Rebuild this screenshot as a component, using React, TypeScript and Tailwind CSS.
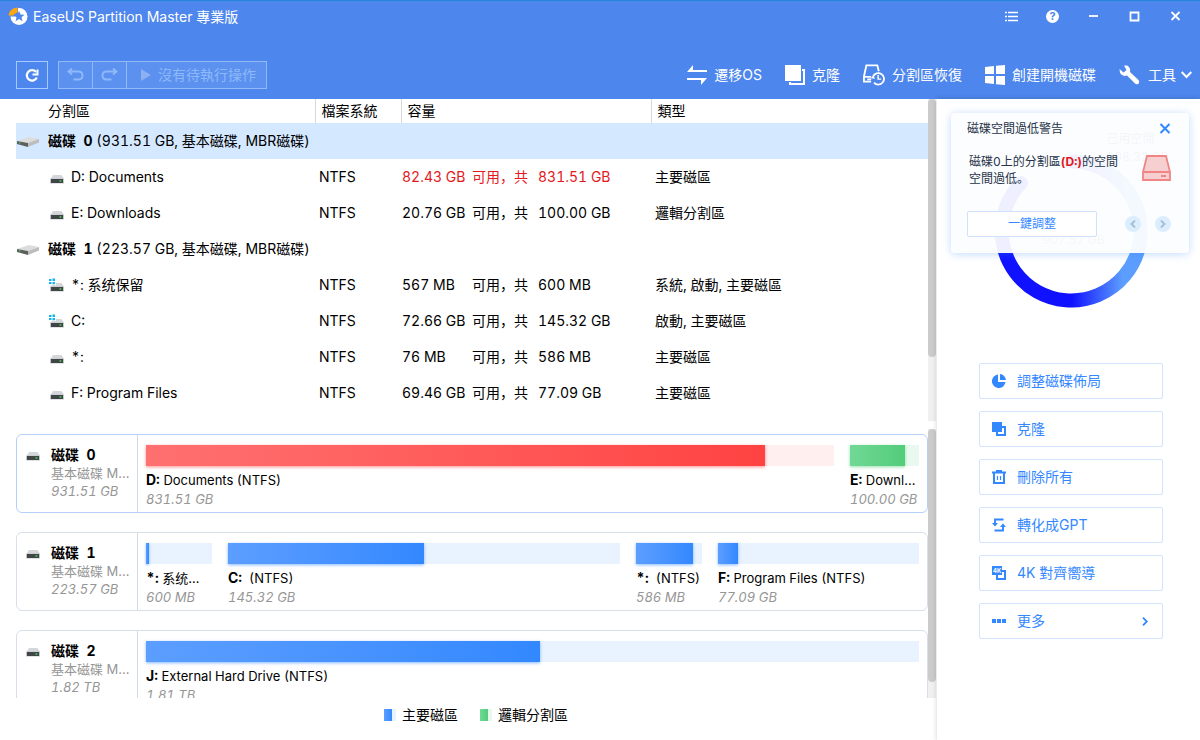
import type { ReactNode } from "react";

type Volume = {
  letter: string;
  name: string;
  free: string;
  total: string;
  type: string;
  system?: boolean;
  low?: boolean;
};

type Disk = { id: number; info: string; volumes: Volume[] };

type Bar = {
  letter: string;
  label: string;
  size: string;
  grow: number;
  used: number;
  tone: "blue" | "red" | "green";
};

const disks: Disk[] = [
  {
    id: 0,
    info: "(931.51 GB, 基本磁碟, MBR磁碟)",
    volumes: [
      { letter: "D:", name: "Documents", free: "82.43 GB", total: "831.51 GB", type: "主要磁區", low: true },
      { letter: "E:", name: "Downloads", free: "20.76 GB", total: "100.00 GB", type: "邏輯分割區" },
    ],
  },
  {
    id: 1,
    info: "(223.57 GB, 基本磁碟, MBR磁碟)",
    volumes: [
      { letter: "*:", name: "系统保留", free: "567 MB", total: "600 MB", type: "系統, 啟動, 主要磁區", system: true },
      { letter: "C:", name: "", free: "72.66 GB", total: "145.32 GB", type: "啟動, 主要磁區", system: true },
      { letter: "*:", name: "", free: "76 MB", total: "586 MB", type: "主要磁區" },
      { letter: "F:", name: "Program Files", free: "69.46 GB", total: "77.09 GB", type: "主要磁區" },
    ],
  },
];

const maps: { id: number; size: string; bars: Bar[] }[] = [
  {
    id: 0,
    size: "931.51 GB",
    bars: [
      { letter: "D:", label: "Documents (NTFS)", size: "831.51 GB", grow: 688, used: 90, tone: "red" },
      { letter: "E:", label: "Downloads (NTFS)", size: "100.00 GB", grow: 69, used: 79, tone: "green" },
    ],
  },
  {
    id: 1,
    size: "223.57 GB",
    bars: [
      { letter: "*:", label: "系统保留 (NTFS)", size: "600 MB", grow: 66, used: 5, tone: "blue" },
      { letter: "C:", label: " (NTFS)", size: "145.32 GB", grow: 392, used: 50, tone: "blue" },
      { letter: "*:", label: " (NTFS)", size: "586 MB", grow: 66, used: 87, tone: "blue" },
      { letter: "F:", label: "Program Files (NTFS)", size: "77.09 GB", grow: 201, used: 10, tone: "blue" },
    ],
  },
  {
    id: 2,
    size: "1.82 TB",
    bars: [{ letter: "J:", label: "External Hard Drive (NTFS)", size: "1.81 TB", grow: 773, used: 51, tone: "blue" }],
  },
];

const tones = {
  blue: {
    track: "bg-[#e8f3ff]",
    fill: "bg-linear-to-r from-[#5c9eff] to-[#3388ff] shadow-[0_1px_3px_rgba(51,136,255,0.6)]",
  },
  red: {
    track: "bg-[#ffefee]",
    fill: "bg-linear-to-r from-[#ff7070] to-[#ff4242] shadow-[0_1px_3px_rgba(255,66,66,0.6)]",
  },
  green: {
    track: "bg-[#e9f9ef]",
    fill: "bg-linear-to-r from-[#70d995] to-[#52cc7a] shadow-[0_1px_3px_rgba(82,204,122,0.6)]",
  },
};

function Logo() {
  return (
    <svg width="20" height="19" viewBox="0 0 20 19" aria-hidden="true">
      <circle cx="11" cy="9.5" r="8.5" fill="#fff" />
      <path d="M-1 -1H10V9.500H-1Z" fill="#4d86ec" />
      <path d="M9.500 0.500V5.500C7.500 6.200 6.300 7 5.300 8.500H0.500C1 4 4.500 0.800 9.500 0.500Z" fill="#ffa60d" />
      <path
        d="M11 3.800L12.500 7.500L16.500 7.800L13.500 10.300L14.500 14.200L11 12.100L7.600 14.200L8.500 10.300L5.500 7.800L9.500 7.500Z"
        fill="#4d86ec"
      />
    </svg>
  );
}

function DriveIcon({ system }: { system?: boolean }) {
  return (
    <svg width="16" height="16" viewBox="0 0 16 16" className="shrink-0" aria-hidden="true">
      <path d="M4 6H12.500L15 10H1.500Z" fill="#d3d7da" />
      <rect x="1" y="9.500" width="14" height="5" fill="#c3c7cc" />
      <rect x="2" y="10" width="12" height="4" fill="#414548" />
      <rect x="10.500" y="11.200" width="1.800" height="1.500" fill="#2fe236" />
      {system && (
        <g>
          <path d="M0 1H7V8H0Z" fill="#fff" />
          <path d="M0 2H2.500V4H0ZM3.500 1.500H6V4H3.500ZM0 5H2.500V7H0ZM3.500 5H6V7.300H3.500Z" fill="#12b5ec" />
        </g>
      )}
    </svg>
  );
}

function DiskIcon() {
  return (
    <svg width="24" height="14" viewBox="0 0 24 14" className="shrink-0" aria-hidden="true">
      <path d="M1 7L13 3L23 5L12 9Z" fill="#dcdcdc" />
      <path d="M1 7L12 9V13L1 10Z" fill="#5c605d" />
      <path d="M12 9L23 5V8.500L12 13Z" fill="#bdbdbd" />
      <rect x="3" y="8.200" width="1.500" height="1.500" fill="#4cae4f" />
    </svg>
  );
}

function Scrollbar({ thumb }: { thumb: string }) {
  return (
    <div className="w-2 shrink-0 bg-[#f0f0f0]" aria-hidden="true">
      <div className={`${thumb} rounded-full bg-[#cbcbcb]`} />
    </div>
  );
}

function TitleBar() {
  return (
    <div className="flex h-[31px] items-center justify-between pl-2 pr-1">
      <div className="flex items-center gap-[5px]">
        <Logo />
        <h1 className="text-sm text-white">EaseUS Partition Master 專業版</h1>
      </div>
      <div className="flex">
        <WindowButton label="選單">
          <path d="M0 2.500H2M3 2.500H13M0 6.500H2M3 6.500H13M0 10.500H2M3 10.500H13" stroke="#fff" strokeWidth="1.500" fill="none" />
        </WindowButton>
        <button type="button" aria-label="說明" className="flex h-7 w-[41px] items-center justify-center">
          <span className="flex size-[13px] items-center justify-center rounded-full bg-white text-[11px] font-bold text-[#4d86ec]">
            ?
          </span>
        </button>
        <WindowButton label="最小化">
          <path d="M2 6H11" stroke="#fff" strokeWidth="1.800" />
        </WindowButton>
        <WindowButton label="最大化">
          <path d="M2.500 2.500H10.500V10.500H2.500Z" stroke="#fff" strokeWidth="1.800" fill="none" />
        </WindowButton>
        <WindowButton label="關閉">
          <path d="M2.500 2L10.500 10M10.500 2L2.500 10" stroke="#fff" strokeWidth="1.800" />
        </WindowButton>
      </div>
    </div>
  );
}

function WindowButton({ label, children }: { label: string; children: ReactNode }) {
  return (
    <button type="button" aria-label={label} className="flex h-7 w-[41px] items-center justify-center">
      <svg width="13" height="13" viewBox="0 0 13 13" aria-hidden="true">
        {children}
      </svg>
    </button>
  );
}

function ToolButton({ icon, children }: { icon: ReactNode; children: ReactNode }) {
  return (
    <button type="button" className="flex items-center gap-[7px] whitespace-nowrap text-sm text-white">
      {icon}
      {children}
    </button>
  );
}

function Toolbar() {
  return (
    <div className="flex h-7 items-center justify-between pl-4 pr-2">
      <div className="flex gap-[10px]">
        <button
          type="button"
          aria-label="重新整理"
          className="flex h-7 w-8 items-center justify-center border border-[#a6c8ff]"
        >
          <svg width="14" height="14" viewBox="0 0 14 14" fill="none" aria-hidden="true">
            <path d="M11.800 9.500A5.200 5.200 0 1 1 11 4" stroke="#fff" strokeWidth="2.200" />
            <path d="M12.500 1.500V6.500H7.500" fill="none" stroke="#fff" strokeWidth="2" />
          </svg>
        </button>
        <div className="flex h-7 divide-x divide-[#92b9f8] border border-[#92b9f8] bg-[#5c91ef]">
          <button type="button" disabled aria-label="復原" className="flex w-[34px] items-center justify-center">
            <svg width="18" height="14" viewBox="0 0 18 14" fill="none" stroke="#8db9fa" strokeWidth="1.900" aria-hidden="true">
              <path d="M5 0.500L1.500 3.500L5 6.500M1.500 3.500H11.500Q15.500 3.500 15.500 7.500T11.500 11.500H6.500" />
            </svg>
          </button>
          <button type="button" disabled aria-label="重做" className="flex w-[34px] items-center justify-center">
            <svg width="18" height="14" viewBox="0 0 18 14" fill="none" stroke="#8db9fa" strokeWidth="1.900" aria-hidden="true">
              <path d="M12 0.500L15.500 3.500L12 6.500M15.500 3.500H5.500Q1.500 3.500 1.500 7.500T5.500 11.500H10.500" />
            </svg>
          </button>
          <button type="button" disabled className="flex items-center gap-[7px] pl-[14px] pr-[10px] text-sm text-[#8db9fa]">
            <svg width="10" height="12" viewBox="0 0 10 12" aria-hidden="true">
              <path d="M0 0L10 6L0 12Z" fill="#8db0f3" />
            </svg>
            沒有待執行操作
          </button>
        </div>
      </div>

      <div className="flex gap-[23px]">
        <ToolButton
          icon={
            <svg width="20" height="20" viewBox="0 0 20 20" aria-hidden="true">
              <path d="M0 7L6 0V5H20V7ZM20 13L14 20V15H0V13Z" fill="#fff" />
            </svg>
          }
        >
          遷移OS
        </ToolButton>
        <ToolButton
          icon={
            <svg width="20" height="20" viewBox="0 0 20 20" aria-hidden="true">
              <path d="M0 0H16V16H0Z" fill="#fff" />
              <path d="M17 5H19V19H5V17" fill="none" stroke="#fff" strokeWidth="2" />
            </svg>
          }
        >
          克隆
        </ToolButton>
        <ToolButton
          icon={
            <svg width="22" height="22" viewBox="0 0 23 23" fill="none" stroke="#fff" strokeWidth="1.900" aria-hidden="true">
              <path d="M16.500 7.500L15 1.500H3.500L1 13V18.500H8.500M1 13.500H8.500M4.500 16H8.500" />
              <path d="M10.500 13A6 6 0 1 1 11.500 19.500" />
              <path d="M8 15L11 12L12.500 15.500Z" fill="#fff" stroke="none" />
              <path d="M15.800 11.500V15.800H19" strokeWidth="1.500" />
            </svg>
          }
        >
          分割區恢復
        </ToolButton>
        <ToolButton
          icon={
            <svg width="20" height="20" viewBox="0 0 20 20" fill="#fff" aria-hidden="true">
              <path d="M0 2L9 1V9H0ZM11 0.800L20 0V9H11ZM0 11H9V19L0 18ZM11 11H20V20L11 19.200Z" />
            </svg>
          }
        >
          創建開機磁碟
        </ToolButton>
        <ToolButton
          icon={
            <svg width="22" height="20" viewBox="0 0 22 20" fill="none" aria-hidden="true">
              <path
                d="M5 0.500L8 0.500Q12 2.500 11 7L19.500 15Q21 17 19.500 18.800Q17.500 20 16 18.500L8 10.500Q3.500 12 1 8L0.500 4L4.500 7.500L7.500 5Z"
                fill="#fff"
              />
            </svg>
          }
        >
          工具
          <svg width="11" height="8" viewBox="0 0 11 8" fill="none" className="-ml-0.5" aria-hidden="true">
            <path d="M0.700 1L5.500 6L10.300 1" stroke="#fff" strokeWidth="2" />
          </svg>
        </ToolButton>
      </div>
    </div>
  );
}

function PartitionTable() {
  return (
    <div className="flex min-h-0 flex-[6]">
      <div className="min-w-0 flex-1 overflow-hidden">
        <table className="w-full table-fixed text-left text-sm">
          <colgroup>
            <col className="w-[299px]" />
            <col className="w-[86px]" />
            <col className="w-[250px]" />
            <col />
          </colgroup>
          <thead>
            <tr className="h-6 leading-6">
              <th className="pl-8 font-normal">分割區</th>
              <th className="border-l border-[#d8d8d8] pl-1.5 font-normal">檔案系統</th>
              <th className="border-l border-[#d8d8d8] pl-1.5 font-normal">容量</th>
              <th className="border-l border-[#d8d8d8] pl-1.5 font-normal">類型</th>
            </tr>
          </thead>
          {disks.map((disk) => (
            <tbody key={disk.id}>
              <tr className={disk.id === 0 ? "h-9 bg-[#d4e8ff]" : "h-9"}>
                <td colSpan={4}>
                  <div className="flex items-center gap-2">
                    <DiskIcon />
                    <span className="whitespace-pre">
                      <b>磁碟&nbsp; {disk.id}</b> {disk.info}
                    </span>
                  </div>
                </td>
              </tr>
              {disk.volumes.map((v) => (
                <tr key={v.letter + v.total} className="h-9">
                  <td className="pl-[33px]">
                    <div className="flex items-center gap-1.5">
                      <DriveIcon system={v.system} />
                      <span>
                        {v.letter} {v.name}
                      </span>
                    </div>
                  </td>
                  <td className="pl-1">NTFS</td>
                  <td className={v.low ? "pl-px text-[#e3191e]" : "pl-px"}>
                    <div className="flex">
                      <span className="w-[70px]">{v.free}</span>
                      <span className="w-[42px]">可用，</span>
                      <span className="w-6">共</span>
                      <span>{v.total}</span>
                    </div>
                  </td>
                  <td className="pl-1">{v.type}</td>
                </tr>
              ))}
            </tbody>
          ))}
        </table>
      </div>
      <Scrollbar thumb="h-4/5" />
    </div>
  );
}

function DiskMap() {
  return (
    <div className="flex min-h-0 flex-[5]">
      <div className="flex min-w-0 flex-1 flex-col gap-[19px] overflow-hidden pt-[5px]">
        {maps.map((disk) => (
          <section
            key={disk.id}
            className={`flex h-[79px] shrink-0 rounded-md border ${
              disk.id === 0 ? "border-[#b5d1fb]" : "border-[#d9dfe8]"
            }`}
          >
            <div className="flex w-[121px] shrink-0 gap-[10px] border-r border-[#d0dae8] pl-2 pt-[11px]">
              <DriveIcon />
              <div className="min-w-0 flex-1 pr-1.5 text-[13px] leading-[18px] text-[#969696]">
                <h2 className="text-sm leading-[18px] font-bold text-black">磁碟&nbsp; {disk.id}</h2>
                <p className="truncate">基本磁碟 MBR磁碟</p>
                <p className="italic">{disk.size}</p>
              </div>
            </div>
            <div className="flex min-w-0 flex-1 gap-4 pt-[10px] pr-2 pl-2">
              {disk.bars.map((bar) => (
                <div key={bar.letter + bar.size} className="min-w-0 basis-0" style={{ flexGrow: bar.grow }}>
                  <div className={`h-[21px] ${tones[bar.tone].track}`}>
                    <div className={`h-full ${tones[bar.tone].fill}`} style={{ width: `${bar.used}%` }} />
                  </div>
                  <p className="mt-1 truncate text-[13px] leading-5 whitespace-pre">
                    <b className="text-sm leading-5">{bar.letter}</b> {bar.label}
                  </p>
                  <p className="text-[13px] leading-[18px] whitespace-nowrap text-[#969696] italic">{bar.size}</p>
                </div>
              ))}
            </div>
          </section>
        ))}
      </div>
      <Scrollbar thumb="h-[94%]" />
    </div>
  );
}

function UsageRing() {
  return (
    <div className="relative mx-auto size-[154px]">
      <svg viewBox="0 0 154 154" className="size-full" fill="none" aria-hidden="true">
        <defs>
          <linearGradient id="ring" x1="0" y1="0" x2="154" y2="0" gradientUnits="userSpaceOnUse">
            <stop offset="0.500" stopColor="#1012ff" />
            <stop offset="0.830" stopColor="#5c9eff" />
          </linearGradient>
        </defs>
        <path d="M26 29A69.500 69.500 0 1 0 77 7.500" stroke="url(#ring)" strokeWidth="14" strokeLinecap="round" />
      </svg>
      <p className="absolute top-[78px] left-12 text-xs whitespace-nowrap text-[#777]">907.57 GB</p>
      <p className="absolute -top-6 left-[112px] text-xs leading-[18px] whitespace-nowrap text-[#555]">
        已用空間
        <br />
        908.32 GB
      </p>
    </div>
  );
}

function LowSpaceAlert() {
  return (
    <div
      role="alert"
      className="absolute top-[14px] right-[11px] left-[14px] h-[140px] rounded bg-[#fcfdff]/95 pt-2 pr-[18px] pl-4 text-xs text-[#263449] shadow-[0_1px_8px_rgba(51,136,255,0.3)]"
    >
      <div className="flex h-4 items-center justify-between">
        <h2>磁碟空間過低警告</h2>
        <button type="button" aria-label="關閉警告">
          <svg width="12" height="12" viewBox="0 0 12 12" aria-hidden="true">
            <path d="M1.500 1L10.500 10M10.500 1L1.500 10" stroke="#3388ff" strokeWidth="2" />
          </svg>
        </button>
      </div>
      <div className="mt-4 flex justify-between pl-0.5">
        <p className="leading-[17px]">
          磁碟0上的分割區<b className="text-[#e3191e]">(D:)</b>的空間
          <br />
          空間過低。
        </p>
        <svg width="29" height="26" viewBox="0 0 29 26" className="mt-0.5" fill="#f6cfd0" stroke="#f18484" strokeWidth="1.800" aria-hidden="true">
          <path d="M1 17L5 1H24L28 17V25H1ZM1 17H28M19 21H24" />
        </svg>
      </div>
      <div className="mt-6 flex items-center justify-between">
        <button type="button" className="h-[26px] w-[130px] rounded-xs border border-[#cfe1fc] bg-white text-[#3388ff]">
          一鍵調整
        </button>
        <div className="flex gap-[14px]">
          <button type="button" aria-label="上一則" className="flex size-4 items-center justify-center rounded-full bg-[#dcedfd]">
            <svg width="6" height="8" viewBox="0 0 6 8" fill="none" aria-hidden="true">
              <path d="M5 0.500L1.500 4L5 7.500" stroke="#a3bdd6" strokeWidth="1.800" />
            </svg>
          </button>
          <button type="button" aria-label="下一則" className="flex size-4 items-center justify-center rounded-full bg-[#dcedfd]">
            <svg width="6" height="8" viewBox="0 0 6 8" fill="none" aria-hidden="true">
              <path d="M1 0.500L4.500 4L1 7.500" stroke="#a3bdd6" strokeWidth="1.800" />
            </svg>
          </button>
        </div>
      </div>
    </div>
  );
}

const actions: { label: string; icon: ReactNode; more?: boolean }[] = [
  {
    label: "調整磁碟佈局",
    icon: <path d="M6 0.500A6.800 6.800 0 1 0 13.500 8H6ZM8 0V6H14A6.500 6.500 0 0 0 8 0Z" fill="#3388ff" />,
  },
  {
    label: "克隆",
    icon: (
      <>
        <path d="M0 0H10V10H0Z" fill="#3388ff" />
        <path d="M10 5H13V13H5V10" fill="none" stroke="#3388ff" strokeWidth="2" />
      </>
    ),
  },
  {
    label: "刪除所有",
    icon: (
      <>
        <path d="M0 2.500H14M4 1H10M2 3V13H12V3" fill="none" stroke="#3388ff" strokeWidth="2" />
        <path d="M5.500 6V10M8.500 6V10" stroke="#3388ff" strokeWidth="1.200" />
      </>
    ),
  },
  {
    label: "轉化成GPT",
    icon: (
      <>
        <path d="M11.500 1.500H3V7.500M2.500 12.500H11V6.500" fill="none" stroke="#3388ff" strokeWidth="1.900" />
        <path d="M0 5L3 8.500L6 5ZM8 9L11 5.500L14 9Z" fill="#3388ff" />
      </>
    ),
  },
  {
    label: "4K 對齊嚮導",
    icon: (
      <>
        <path d="M0 0H10V9H0Z" fill="#3388ff" />
        <path d="M10 5H13V13H5V9" fill="none" stroke="#3388ff" strokeWidth="2" />
        <text x="1" y="7" fontSize="6" fontWeight="700" fill="#fff">
          4K
        </text>
      </>
    ),
  },
  {
    label: "更多",
    icon: <path d="M0 5H4V9H0ZM5 5H9V9H5ZM10 5H14V9H10Z" fill="#3388ff" />,
    more: true,
  },
];

function Sidebar() {
  return (
    <aside className="relative w-[263px] shrink-0 bg-white pt-[55px] shadow-[0_0_5px_rgba(0,0,0,0.2)]">
      <div className="mr-[-6px]">
        <UsageRing />
      </div>
      <div className="mt-[55px] flex flex-col gap-3 pr-[37px] pl-[42px]">
        {actions.map((a) => (
          <button
            key={a.label}
            type="button"
            className="flex h-9 items-center rounded-xs border border-[#d3e4fd] px-3 text-sm text-[#3388ff]"
          >
            <svg width="14" height="14" viewBox="0 0 14 14" aria-hidden="true">
              {a.icon}
            </svg>
            <span className="ml-[11px]">{a.label}</span>
            {a.more && (
              <svg width="6" height="9" viewBox="0 0 6 9" fill="none" className="mr-0.5 ml-auto" aria-hidden="true">
                <path d="M1 0.700L4.800 4.500L1 8.300" stroke="#3388ff" strokeWidth="1.800" />
              </svg>
            )}
          </button>
        ))}
      </div>
      <LowSpaceAlert />
    </aside>
  );
}

function Legend() {
  return (
    <div className="flex h-[42px] shrink-0 items-center justify-center gap-[22px] pb-2 text-sm">
      <div className="flex items-center gap-[6px]">
        <span className="h-3 w-3 border-r-4 border-[#e8f3ff] bg-linear-to-r from-[#5c9eff] to-[#3388ff]" />
        主要磁區
      </div>
      <div className="flex items-center gap-[6px]">
        <span className="h-3 w-3 border-r-4 border-[#e9f9ef] bg-linear-to-r from-[#70d995] to-[#52cc7a]" />
        邏輯分割區
      </div>
    </div>
  );
}

export default function App() {
  return (
    <div className="flex h-screen min-w-[1000px] flex-col bg-white font-['Inter','Noto_Sans_CJK_SC',sans-serif] text-black tabular-nums">
      <header className="shrink-0 border-t border-[#2585d8] bg-[#4d86ec] pb-[10px]">
        <TitleBar />
        <div className="mt-[29px]">
          <Toolbar />
        </div>
      </header>
      <div className="flex min-h-0 flex-1">
        <main className="flex min-w-0 flex-1 flex-col pr-px pl-4">
          <PartitionTable />
          <div className="h-2 shrink-0" />
          <DiskMap />
          <Legend />
        </main>
        <Sidebar />
      </div>
    </div>
  );
}
